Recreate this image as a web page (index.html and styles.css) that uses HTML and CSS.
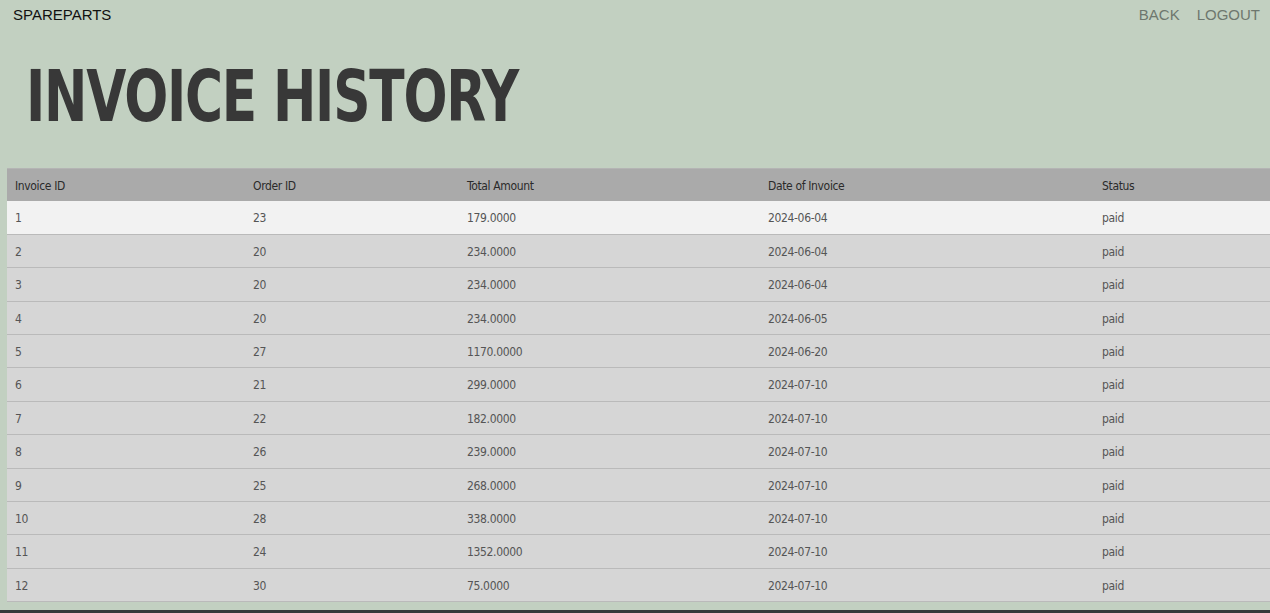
FILE: index.html
```html
<!DOCTYPE html>
<html lang="en">
<head>
<meta charset="utf-8">
<title>Invoice History</title>
<link rel="stylesheet" href="styles.css">
</head>
<body>
<nav class="topnav">
  <a class="brand" href="#">SPAREPARTS</a>
  <div class="links">
    <a href="#">BACK</a>
    <a href="#">LOGOUT</a>
  </div>
</nav>
<h1 class="title">INVOICE HISTORY</h1>
<table class="invoices">
  <thead>
    <tr><th class="c1">Invoice ID</th><th class="c2">Order ID</th><th class="c3">Total Amount</th><th class="c4">Date of Invoice</th><th>Status</th></tr>
  </thead>
  <tbody>
    <tr class="active"><td>1</td><td>23</td><td>179.0000</td><td>2024-06-04</td><td>paid</td></tr>
    <tr><td>2</td><td>20</td><td>234.0000</td><td>2024-06-04</td><td>paid</td></tr>
    <tr><td>3</td><td>20</td><td>234.0000</td><td>2024-06-04</td><td>paid</td></tr>
    <tr><td>4</td><td>20</td><td>234.0000</td><td>2024-06-05</td><td>paid</td></tr>
    <tr><td>5</td><td>27</td><td>1170.0000</td><td>2024-06-20</td><td>paid</td></tr>
    <tr><td>6</td><td>21</td><td>299.0000</td><td>2024-07-10</td><td>paid</td></tr>
    <tr><td>7</td><td>22</td><td>182.0000</td><td>2024-07-10</td><td>paid</td></tr>
    <tr><td>8</td><td>26</td><td>239.0000</td><td>2024-07-10</td><td>paid</td></tr>
    <tr><td>9</td><td>25</td><td>268.0000</td><td>2024-07-10</td><td>paid</td></tr>
    <tr><td>10</td><td>28</td><td>338.0000</td><td>2024-07-10</td><td>paid</td></tr>
    <tr><td>11</td><td>24</td><td>1352.0000</td><td>2024-07-10</td><td>paid</td></tr>
    <tr><td>12</td><td>30</td><td>75.0000</td><td>2024-07-10</td><td>paid</td></tr>
  </tbody>
</table>
<footer class="foot"></footer>
</body>
</html>
```

FILE: styles.css
```css
html, body {
  margin: 0;
  padding: 0;
  background: #c2d0c1;
}
body {
  font-family: "Liberation Sans", Arial, sans-serif;
  overflow: hidden;
}
.topnav {
  display: flex;
  justify-content: space-between;
  align-items: flex-start;
  padding: 6px 10px 0 13px;
  font-size: 15px;
  line-height: 18px;
}
.topnav a {
  text-decoration: none;
}
.brand {
  color: #111;
}
.links {
  display: flex;
  gap: 17px;
}
.links a {
  color: #6e776e;
}
.title {
  margin: 34px 0 33px 26px;
  font-family: "DejaVu Sans Condensed", "Liberation Sans Narrow", sans-serif;
  font-weight: 700;
  font-size: 72px;
  line-height: 77px;
  letter-spacing: -1.5px;
  color: #383838;
  transform: scaleX(0.8);
  transform-origin: left center;
}
.invoices {
  margin-left: 7px;
  width: 1263px;
  border-collapse: collapse;
  font-family: "DejaVu Sans Condensed", "Liberation Sans Narrow", sans-serif;
  font-size: 12px;
  letter-spacing: -0.35px;
}
.invoices th, .invoices td {
  text-align: left;
  padding: 9px 8px 7px 8px;
  line-height: 16.4px;
}
.invoices th {
  background: #aaaaaa;
  color: #2a2a2a;
  font-weight: 400;
  border-top: 1px solid #b4b4b4;
}
.invoices td {
  background: #d6d6d6;
  color: #555;
  border-bottom: 1px solid #bababa;
}
.invoices tr.active td {
  background: #f2f2f2;
}
.c1 { width: 222px; }
.c2 { width: 198px; }
.c3 { width: 285px; }
.c4 { width: 318px; }
.foot {
  margin-top: 8px;
  height: 10px;
  background: #3a3a3a;
}
```
